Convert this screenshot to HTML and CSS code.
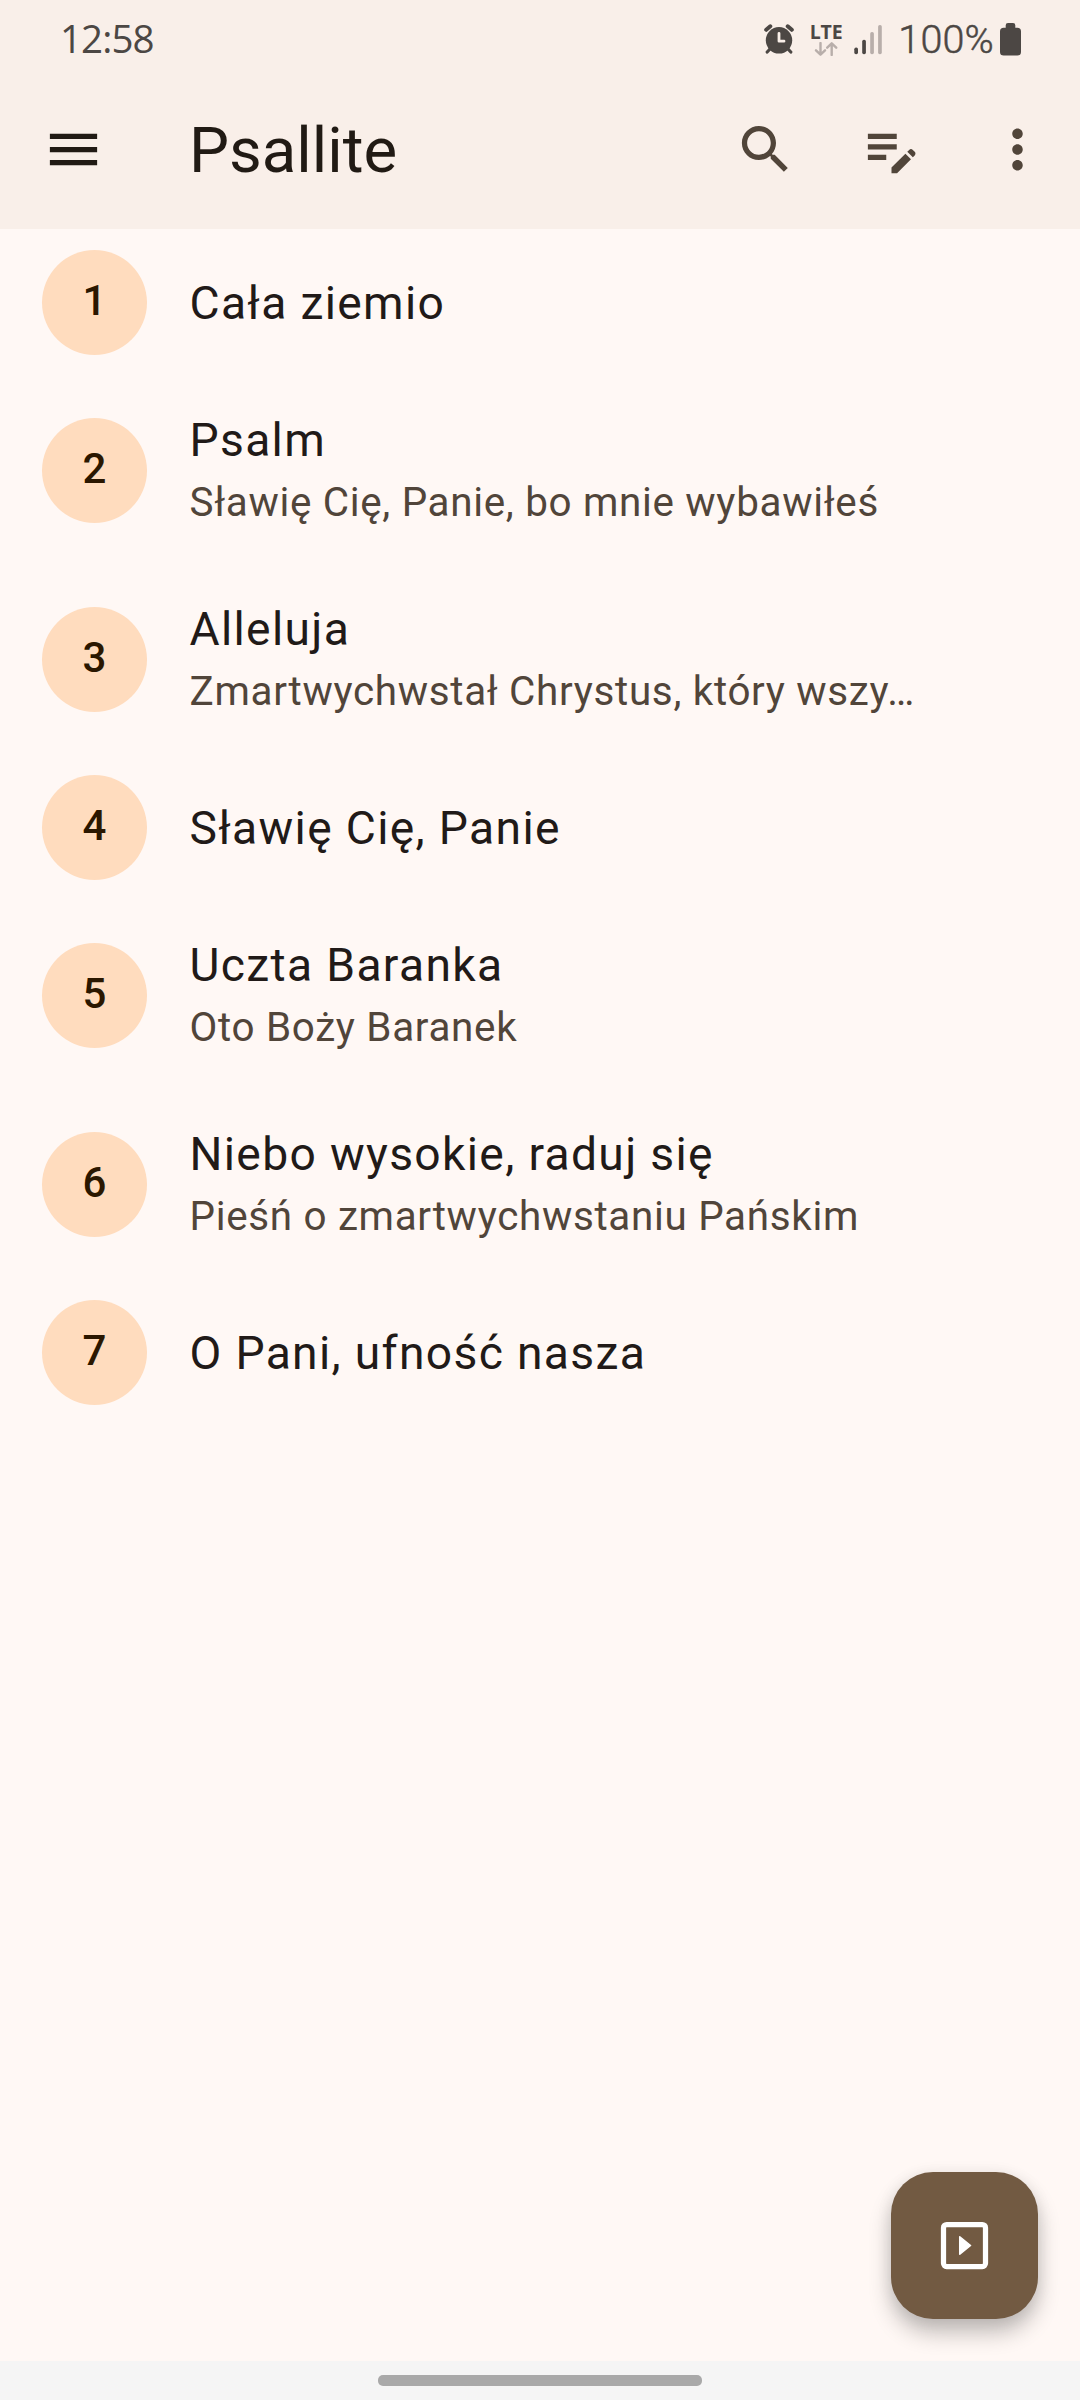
FILE: index.html
```html
<!DOCTYPE html>
<html lang="pl">
<head>
<meta charset="utf-8">
<title>Psallite</title>
<link rel="stylesheet" href="styles.css">
</head>
<body>
<div class="screen">
  <header class="header">
    <div class="status">
      <span class="clock">12:58</span>
      <div class="status-icons">
        <svg class="alarm" width="30" height="30" viewBox="0 0 30 30">
          <circle cx="15" cy="16.300" r="13.200" class="fill"/>
          <path class="line thick" d="M2.200 5.800 6.300 2.300M27.800 5.800 23.700 2.300"/>
          <path class="line" d="M6 25 3.200 28M24 25l2.800 3"/>
          <path class="hands" d="M15 9.300v7.900h5"/>
        </svg>
        <div class="lte">
          <span class="lte-text">LTE</span>
          <svg width="24" height="14" viewBox="0 0 24 14">
            <path class="arrows" d="M6.500 1v11.500M2 8.300l4.500 4.400L11 8.300M17.700 13V1.500M13.200 5.700l4.500-4.400 4.500 4.400"/>
          </svg>
        </div>
        <svg class="signal" width="28" height="30" viewBox="0 0 28 30">
          <rect x="0.300" y="22.600" width="3.700" height="6.600" rx="1.700" class="fill"/>
          <rect x="8.200" y="14.800" width="3.700" height="14.400" rx="1.700" class="fill"/>
          <rect x="16.200" y="7" width="3.700" height="22.200" rx="1.700" class="dim"/>
          <rect x="24.100" y="0" width="3.700" height="29.200" rx="1.700" class="dim"/>
        </svg>
        <span class="percent">100%</span>
        <svg class="battery" width="21" height="33" viewBox="0 0 21 33">
          <path class="fill" d="M8 0h5q2.300 0 2.300 2.300V4.700h2q3.700 0 3.700 3.700V29q0 3.600-3.700 3.600H3.700Q0 32.600 0 29V8.400Q0 4.700 3.700 4.700h2V2.300Q5.700 0 8 0z"/>
        </svg>
      </div>
    </div>
    <div class="toolbar">
      <svg class="icon menu" viewBox="0 0 24 24"><path d="M3 18h18v-2H3v2zm0-5h18v-2H3v2zm0-7v2h18V6H3z"/></svg>
      <h1 class="heading">Psallite</h1>
      <div class="actions">
        <svg class="icon" viewBox="0 0 24 24"><path d="M15.500 14h-.79l-.28-.27C15.410 12.590 16 11.110 16 9.500 16 5.910 13.090 3 9.500 3S3 5.910 3 9.500 5.910 16 9.500 16c1.610 0 3.090-.59 4.230-1.570l.27.28v.79l5 4.990L20.490 19l-4.990-5zm-6 0C7.010 14 5 11.990 5 9.500S7.010 5 9.500 5 14 7.010 14 9.500 11.990 14 9.500 14z"/></svg>
        <svg class="icon" viewBox="0 0 24 24"><path d="M3 10h11v2H3v-2zm0-2h11V6H3v2zm0 8h7v-2H3v2zm15.010-3.130.71-.71a.996.996 0 0 1 1.410 0l.71.71c.39.39.39 1.020 0 1.410l-.71.71-2.120-2.120zm-.71.71-5.300 5.300V21h2.120l5.300-5.300-2.120-2.120z"/></svg>
        <svg class="icon" viewBox="0 0 24 24"><path d="M12 8c1.100 0 2-.9 2-2s-.9-2-2-2-2 .9-2 2 .9 2 2 2zm0 2c-1.100 0-2 .9-2 2s.9 2 2 2 2-.9 2-2-.9-2-2-2zm0 6c-1.100 0-2 .9-2 2s.9 2 2 2 2-.9 2-2-.9-2-2-2z"/></svg>
      </div>
    </div>
  </header>
  <main class="list">
    <div class="row"><span class="badge">1</span><div class="text"><div class="title">Cała ziemio</div></div></div>
    <div class="row tall"><span class="badge">2</span><div class="text"><div class="title">Psalm</div><div class="subtitle">Sławię Cię, Panie, bo mnie wybawiłeś</div></div></div>
    <div class="row tall"><span class="badge">3</span><div class="text"><div class="title">Alleluja</div><div class="subtitle">Zmartwychwstał Chrystus, który wszy…</div></div></div>
    <div class="row"><span class="badge">4</span><div class="text"><div class="title">Sławię Cię, Panie</div></div></div>
    <div class="row tall"><span class="badge">5</span><div class="text"><div class="title">Uczta Baranka</div><div class="subtitle">Oto Boży Baranek</div></div></div>
    <div class="row tall"><span class="badge">6</span><div class="text"><div class="title">Niebo wysokie, raduj się</div><div class="subtitle">Pieśń o zmartwychwstaniu Pańskim</div></div></div>
    <div class="row"><span class="badge">7</span><div class="text"><div class="title">O Pani, ufność nasza</div></div></div>
  </main>
  <div class="fab">
    <svg class="fab-icon" viewBox="0 0 24 24">
      <rect class="frame" x="4" y="4" width="16" height="16" rx="1.200"/>
      <path class="play" d="M10.200 8.700v6.600L14.300 12z"/>
    </svg>
  </div>
  <footer class="navbar"><div class="handle"></div></footer>
</div>
</body>
</html>
```
FILE: styles.css
```css
body {
  margin: 0;
  font-family: Roboto, sans-serif;
}

.screen {
  position: relative;
  display: flex;
  flex-direction: column;
  width: 1080px;
  height: 2400px;
  overflow: hidden;
  background: #fff8f5;
}

.header {
  flex: none;
  height: 229px;
  background: #f9efe9;
}

.status {
  display: flex;
  justify-content: space-between;
  box-sizing: border-box;
  height: 78px;
  padding: 0 59px 0 60px;
  color: #4c4744;
}

.clock {
  font-family: "Open Sans", sans-serif;
  font-size: 38.5px;
  line-height: 76px;
  letter-spacing: -0.9px;
}

.status-icons {
  display: flex;
  align-items: flex-start;
}

.alarm {
  margin: 24px 15.5px 0 0;
}

.lte {
  display: flex;
  flex-direction: column;
  width: 32px;
  margin: 23px 12.5px 0 0;
}

.lte-text {
  height: 19px;
  font-family: "Open Sans", sans-serif;
  font-size: 19.5px;
  font-weight: 700;
  line-height: 17px;
  letter-spacing: -0.2px;
}

.lte svg {
  margin-left: 4px;
}

.signal {
  margin: 25px 16px 0 0;
}

.percent {
  font-size: 39.5px;
  font-weight: 300;
  line-height: 80px;
  letter-spacing: 0.2px;
  -webkit-text-stroke: 0.5px #4c4744;
}

.battery {
  margin: 23px 0 0 6px;
}

.fill {
  fill: #4c4744;
}

.dim {
  fill: #b8aeaa;
}

.line {
  fill: none;
  stroke: #4c4744;
  stroke-width: 3.2;
  stroke-linecap: round;
}

.thick {
  stroke-width: 4;
}

.hands {
  fill: none;
  stroke: #f9efe9;
  stroke-width: 2.8;
  stroke-linecap: round;
  stroke-linejoin: round;
}

.arrows {
  fill: none;
  stroke: #b8aeaa;
  stroke-width: 2.4;
  stroke-linecap: round;
  stroke-linejoin: round;
}

.toolbar {
  display: flex;
  align-items: center;
  height: 143px;
  padding: 0 31.5px 0 42px;
  color: #51453a;
}

.icon {
  flex: none;
  width: 63px;
  height: 63px;
  fill: currentColor;
}

.menu {
  color: #211a14;
}

.heading {
  flex: 1;
  margin: 0 0 0 84px;
  padding-top: 2px;
  font-size: 63.5px;
  font-weight: 400;
  line-height: 74px;
  color: #211a14;
}

.actions {
  display: flex;
  gap: 63px;
}

.list {
  flex: 1;
  padding-top: 0.4px;
}

.row {
  display: flex;
  align-items: center;
  gap: 42.5px;
  height: 147px;
  padding: 0 42px;
}

.tall {
  height: 189px;
}

.badge {
  flex: none;
  box-sizing: border-box;
  width: 105px;
  height: 105px;
  border-radius: 50%;
  background: #ffdcbe;
  font-size: 42px;
  font-weight: 500;
  line-height: 101px;
  text-align: center;
  color: #2b1700;
}

.title {
  font-size: 46.2px;
  line-height: 62px;
  letter-spacing: 1.34px;
  white-space: nowrap;
  color: #211a18;
}

.subtitle {
  margin-bottom: -2px;
  font-size: 40.4px;
  line-height: 64px;
  letter-spacing: 0.68px;
  white-space: nowrap;
  color: #51453a;
}

.fab {
  position: absolute;
  right: 42px;
  bottom: 81px;
  display: flex;
  align-items: center;
  justify-content: center;
  width: 147px;
  height: 147px;
  border-radius: 42px;
  background: #725a42;
  box-shadow: 0 14px 22px rgba(0, 0, 0, 0.24), 0 2px 16px rgba(0, 0, 0, 0.08);
}

.fab-icon {
  width: 63px;
  height: 63px;
}

.frame {
  fill: none;
  stroke: #fff;
  stroke-width: 2;
}

.play {
  fill: #fff;
  stroke: #fff;
  stroke-width: 0.6;
  stroke-linejoin: round;
}

.navbar {
  position: relative;
  display: flex;
  justify-content: center;
  box-sizing: border-box;
  height: 39px;
  padding-top: 14px;
  background: #f5f5f5;
}

.handle {
  width: 324px;
  height: 11px;
  border-radius: 5px;
  background: #a9a9a9;
}
```
